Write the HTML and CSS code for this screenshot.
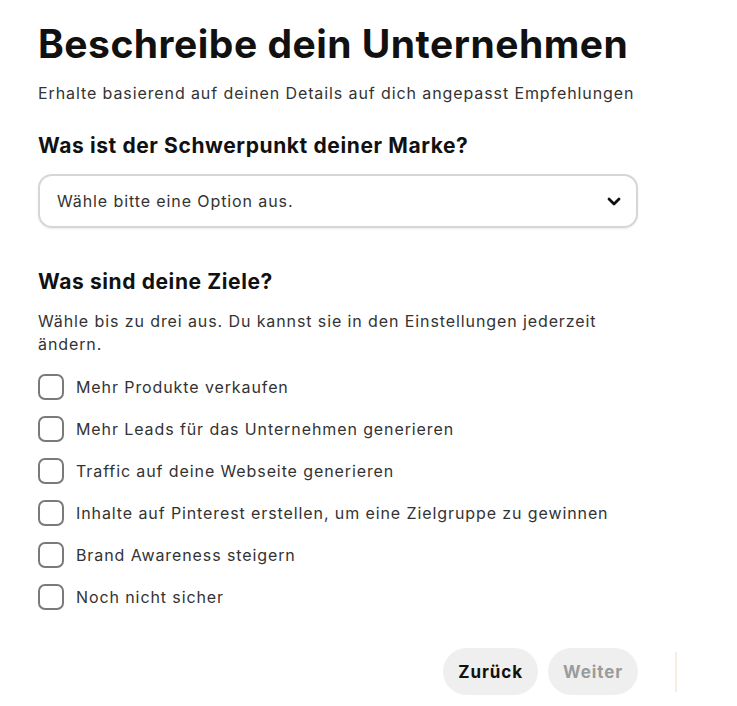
FILE: index.html
```html
<!DOCTYPE html>
<html lang="de">
<head>
    <meta charset="UTF-8">
    <meta name="viewport" content="width=device-width, initial-scale=1.0">
    <title>Beschreibe dein Unternehmen</title>
    <link rel="stylesheet" href="styles.css">
</head>
<body>
    <div class="container">
        <h1 class="title">Beschreibe dein Unternehmen</h1>
        <p class="subtitle">Erhalte basierend auf deinen Details auf dich angepasst Empfehlungen</p>

        <h2 class="question">Was ist der Schwerpunkt deiner Marke?</h2>
        <div class="select-box">
            <span class="select-text">Wähle bitte eine Option aus.</span>
            <svg class="chevron" width="14" height="9" viewBox="0 0 14 9">
                <polyline points="2,2 7,7 12,2" fill="none" stroke="#111" stroke-width="2.8" stroke-linecap="round" stroke-linejoin="round"/>
            </svg>
        </div>

        <h2 class="question question-goals">Was sind deine Ziele?</h2>
        <p class="hint">Wähle bis zu drei aus. Du kannst sie in den Einstellungen jederzeit ändern.</p>

        <div class="goal-list">
            <label class="goal"><input type="checkbox"><span>Mehr Produkte verkaufen</span></label>
            <label class="goal"><input type="checkbox"><span>Mehr Leads für das Unternehmen generieren</span></label>
            <label class="goal"><input type="checkbox"><span>Traffic auf deine Webseite generieren</span></label>
            <label class="goal"><input type="checkbox"><span>Inhalte auf Pinterest erstellen, um eine Zielgruppe zu gewinnen</span></label>
            <label class="goal"><input type="checkbox"><span>Brand Awareness steigern</span></label>
            <label class="goal"><input type="checkbox"><span>Noch nicht sicher</span></label>
        </div>

        <div class="footer">
            <button class="btn btn-back">Zurück</button>
            <button class="btn btn-next">Weiter</button>
            <span class="edge"></span>
        </div>
    </div>
</body>
</html>
```

FILE: styles.css
```css
body {
    margin: 0;
    background-color: #fff;
    color: #333;
    font-family: Inter, "Liberation Sans", Arial, sans-serif;
}
.container {
    width: 600px;
    padding: 20px 0 0 38px;
}
.title {
    margin: 0;
    font-size: 39px;
    line-height: 48px;
    font-weight: 700;
    letter-spacing: 0.5px;
    color: #111;
}
.subtitle {
    margin: 14px 0 0;
    font-size: 16px;
    line-height: 22px;
    letter-spacing: 0.9px;
}
.question {
    margin: 28px 0 0;
    font-size: 21px;
    line-height: 28px;
    font-weight: 700;
    letter-spacing: 0.6px;
    color: #111;
}
.question-goals {
    margin-top: 40px;
}
.select-box {
    box-sizing: border-box;
    margin-top: 14px;
    height: 54px;
    display: flex;
    align-items: center;
    justify-content: space-between;
    padding: 0 15px 0 17px;
    border: 2px solid #d6d6d6;
    border-radius: 14px;
    box-shadow: 0 1px 2px rgba(0, 0, 0, 0.08);
    font-size: 16px;
    letter-spacing: 0.9px;
}
.chevron {
    display: block;
}
.hint {
    margin: 14px 0 0;
    font-size: 16px;
    line-height: 23px;
    letter-spacing: 0.9px;
}
.goal-list {
    margin-top: 18px;
    display: flex;
    flex-direction: column;
    gap: 16px;
}
.goal {
    display: flex;
    align-items: center;
    gap: 12px;
    font-size: 16px;
    letter-spacing: 0.9px;
    cursor: pointer;
}
.goal input {
    appearance: none;
    -webkit-appearance: none;
    margin: 0;
    width: 26px;
    height: 26px;
    border: 2px solid #7a7a7a;
    border-radius: 7px;
    background: #fff;
    flex-shrink: 0;
}
.footer {
    margin: 38px -39px 0 0;
    display: flex;
    justify-content: flex-end;
    align-items: center;
    gap: 10px;
}
.btn {
    height: 47px;
    padding: 0 15px;
    border: none;
    border-radius: 24px;
    background-color: #efefef;
    font-family: inherit;
    font-size: 17px;
    font-weight: 700;
    letter-spacing: 0.9px;
    cursor: pointer;
}
.btn-back {
    color: #111;
}
.btn-next {
    color: #9b9b9b;
}
.edge {
    width: 2px;
    height: 40px;
    margin-left: 27px;
    background-color: #f5ece2;
}
```
